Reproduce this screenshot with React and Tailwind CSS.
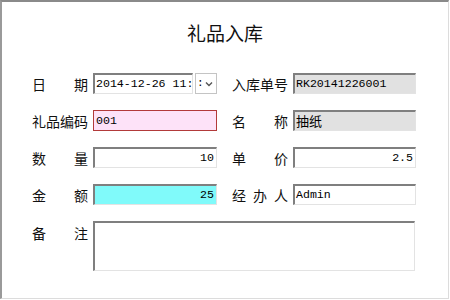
const cjk = "font-['Noto_Sans_CJK_SC','Noto_Sans',sans-serif]";
const mono = "font-['Liberation_Mono','Noto_Sans_CJK_SC',monospace]";

const sunken =
  'h-[21px] border-t-2 border-l-2 border-t-[#7f7f7f] border-l-[#7f7f7f] border-b border-r border-b-[#e3e3e3] border-r-[#e3e3e3] overflow-hidden whitespace-nowrap';

const Label = ({ chars, top }) => (
  <div
    className={`${cjk} w-[56px] flex justify-between text-[14px] text-[#111] leading-none ${top ? 'self-start pt-[5px]' : ''}`}
  >
    {chars.map((c, i) => (
      <span key={i}>{c}</span>
    ))}
  </div>
);

const Field = ({ label, children }) => (
  <div className="flex items-center gap-[5px]">
    <Label chars={label} />
    {children}
  </div>
);

const App = () => {
  return (
    <div className="w-[449px] h-[299px] bg-white border-t-2 border-l-2 border-t-[#8a8a8a] border-l-[#9a9a9a] border-r border-b border-r-[#dcdcdc] border-b-[#dcdcdc]">
      <div className={`${cjk} pt-[21px] text-center text-[19px] leading-[20px] text-[#111]`}>礼品入库</div>

      <div className="pl-[30px] pt-[30px] flex flex-col gap-[16px]">
        <div className="flex gap-[15px]">
          <Field label={['日', '期']}>
            <div className="flex gap-[2px] w-[124px]">
              <div className={`${sunken} ${mono} w-[100px] bg-white pl-[1px] text-[11.6px] leading-[18px] text-black`}>
                2014-12-26 11:
              </div>
              <div className={`${mono} h-[21px] w-[22px] border border-[#c4c4c4] bg-white flex items-center justify-between pl-[1px] pr-[3px] text-[11px] text-black`}>
                <span>:</span>
                <svg width="8" height="6" viewBox="0 0 8 6">
                  <path d="M1 1.5 L4 4.5 L7 1.5" fill="none" stroke="#555" strokeWidth="1.4" />
                </svg>
              </div>
            </div>
          </Field>
          <Field label={['入', '库', '单', '号']}>
            <div className={`${sunken} ${mono} w-[123px] bg-[#e1e1e1] pl-[1px] text-[11.6px] leading-[18px] text-black`}>
              RK20141226001
            </div>
          </Field>
        </div>

        <div className="flex gap-[15px]">
          <Field label={['礼', '品', '编', '码']}>
            <div className={`${mono} h-[21px] w-[124px] border border-[#b23a3a] bg-[#fde2f8] pl-[2px] text-[11.6px] leading-[19px] text-black`}>
              001
            </div>
          </Field>
          <Field label={['名', '称']}>
            <div className={`${sunken} ${cjk} w-[123px] bg-[#e1e1e1] pl-[1px] text-[13px] leading-[18px] text-black`}>
              抽纸
            </div>
          </Field>
        </div>

        <div className="flex gap-[15px]">
          <Field label={['数', '量']}>
            <div className={`${sunken} ${mono} w-[124px] bg-white pr-[2px] text-right text-[11.6px] leading-[18px] text-black`}>
              10
            </div>
          </Field>
          <Field label={['单', '价']}>
            <div className={`${sunken} ${mono} w-[123px] bg-white pr-[2px] text-right text-[11.6px] leading-[18px] text-black`}>
              2.5
            </div>
          </Field>
        </div>

        <div className="flex gap-[15px]">
          <Field label={['金', '额']}>
            <div className={`${sunken} ${mono} w-[124px] bg-[#80fafa] pr-[2px] text-right text-[11.6px] leading-[18px] text-black`}>
              25
            </div>
          </Field>
          <Field label={['经', '办', '人']}>
            <div className={`${sunken} ${mono} w-[123px] bg-white pl-[1px] text-[11.6px] leading-[18px] text-black`}>
              Admin
            </div>
          </Field>
        </div>

        <div className="flex gap-[5px]">
          <Label chars={['备', '注']} top />
          <div className="h-[50px] w-[322px] border-t-2 border-l-2 border-t-[#7f7f7f] border-l-[#7f7f7f] border-b border-r border-b-[#e3e3e3] border-r-[#e3e3e3] bg-white" />
        </div>
      </div>
    </div>
  );
};

export default App;
